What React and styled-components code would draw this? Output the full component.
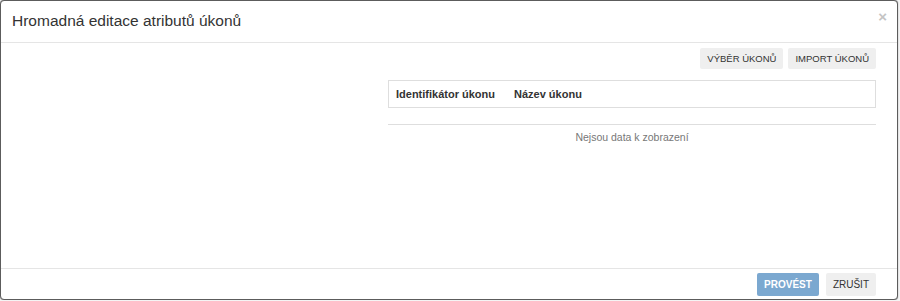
import React from "react";
import styled, { createGlobalStyle } from "styled-components";

const Global = createGlobalStyle`
  html, body { margin: 0; padding: 0; background: #f4f4f4; }
  body { font-family: "Liberation Sans", Arial, sans-serif; color: #333; }
  * { box-sizing: border-box; }
`;

const Modal = styled.div`
  width: 898px;
  height: 300px;
  background: #fff;
  border: 1px solid #5c5c5c;
  border-radius: 4px;
  box-shadow: 0 0 1px rgba(0,0,0,.6);
  display: flex;
  flex-direction: column;
  overflow: hidden;
`;

const Header = styled.div`
  height: 42px;
  flex: none;
  border-bottom: 1px solid #e5e5e5;
  display: flex;
  align-items: center;
  justify-content: space-between;
  padding: 0 10px 2px 11px;
`;

const Title = styled.h4`
  margin: 0;
  font-size: 15.5px;
  font-weight: normal;
  color: #333;
`;

const Close = styled.span`
  font-size: 15px;
  font-weight: bold;
  color: #c4c4c4;
  line-height: 1;
  margin-top: -8px;
`;

const Body = styled.div`
  flex: 1;
  display: grid;
  grid-template-columns: 387px 1fr;
  padding: 5px 21px 0 0;
`;

const Column = styled.div`
  display: flex;
  flex-direction: column;
`;

const Toolbar = styled.div`
  display: flex;
  justify-content: flex-end;
  gap: 5px;
`;

const Button = styled.button`
  font-family: "Liberation Sans", Arial, sans-serif;
  font-size: ${p => p.$small ? "9.5px" : "10px"};
  height: ${p => p.$small ? "21px" : "23px"};
  padding: 0 ${p => p.$small ? "7px" : "7px"};
  border: none;
  border-radius: 2px;
  background: ${p => p.$primary ? "#7ba8d0" : "#efefef"};
  color: ${p => p.$primary ? "#fff" : "#333"};
  font-weight: ${p => p.$primary ? "bold" : "normal"};
  text-transform: uppercase;
  cursor: pointer;
`;

const TableHead = styled.div`
  margin-top: 11px;
  height: 28px;
  border: 1px solid #dedede;
  display: flex;
  align-items: center;
  padding-left: 7px;
  gap: 19px;
  font-size: 11px;
  font-weight: bold;
  color: #333;
`;

const Empty = styled.div`
  margin-top: 16px;
  border-top: 1px solid #dedede;
  padding-top: 6px;
  text-align: center;
  font-size: 10.5px;
  color: #777;
`;

const Footer = styled.div`
  height: 31px;
  flex: none;
  border-top: 1px solid #e5e5e5;
  display: flex;
  justify-content: flex-end;
  align-items: flex-start;
  padding: 4px 21px 0 0;
  gap: 7px;
`;

export default function App() {
  return (
    <>
      <Global />
      <Modal>
        <Header>
          <Title>Hromadná editace atributů úkonů</Title>
          <Close>×</Close>
        </Header>
        <Body>
          <Column />
          <Column>
            <Toolbar>
              <Button $small>Výběr úkonů</Button>
              <Button $small>Import úkonů</Button>
            </Toolbar>
            <TableHead>
              <span>Identifikátor úkonu</span>
              <span>Název úkonu</span>
            </TableHead>
            <Empty>Nejsou data k zobrazení</Empty>
          </Column>
        </Body>
        <Footer>
          <Button $primary>Provést</Button>
          <Button>Zrušit</Button>
        </Footer>
      </Modal>
    </>
  );
}
